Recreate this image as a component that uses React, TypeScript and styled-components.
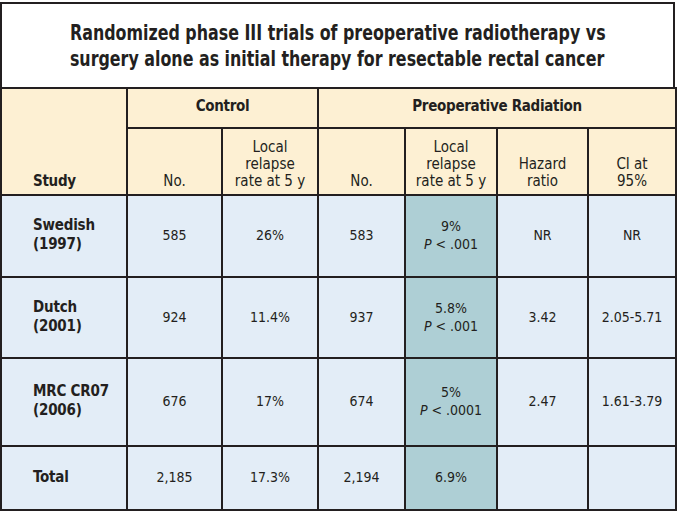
import styled, { createGlobalStyle } from 'styled-components'

const GlobalStyle = createGlobalStyle`
  body {
    margin: 0;
    background: #ffffff;
    font-family: "Liberation Sans Narrow", "DejaVu Sans Condensed", "Liberation Sans", sans-serif;
    color: #231f20;
  }
`

const Frame = styled.div`
  width: 675px;
  margin: 2px 0 0 0;
  border: 2px solid #231f20;
  box-sizing: border-box;
`

const Title = styled.h1`
  margin: 0;
  height: 83px;
  display: flex;
  flex-direction: column;
  justify-content: center;
  align-items: center;
  font-size: 21px;
  line-height: 26px;
  font-weight: bold;
  box-sizing: border-box;
`

// the reference uses a condensed face, so squeeze the title lines
const TitleLine = styled.span`
  display: inline-block;
  white-space: nowrap;
  transform: scaleX(0.84);
`

const Table = styled.table`
  border-collapse: collapse;
  table-layout: fixed;
  margin: 0 0 -2px -2px;
  width: calc(100% + 4px);
`

const HeadCell = styled.th<{ $align?: 'left' | 'center' }>`
  background: #fdf0d3;
  border: 2px solid #231f20;
  font-size: 15px;
  line-height: 17px;
  font-weight: normal;
  text-align: ${(p) => p.$align ?? 'center'};
  vertical-align: bottom;
  padding: 0 4px 4px;
`

const GroupCell = styled(HeadCell)`
  font-weight: bold;
  letter-spacing: -0.3px;
  vertical-align: middle;
  padding: 0 4px 3px;
`

const StudyHead = styled(HeadCell)`
  font-weight: bold;
  letter-spacing: -0.3px;
  padding-left: 31px;
`

const Cell = styled.td<{ $hi?: boolean }>`
  background: ${(p) => (p.$hi ? '#aecfd5' : '#e3edf7')};
  border: 2px solid #231f20;
  font-size: 14px;
  line-height: 18px;
  text-align: center;
  vertical-align: middle;
  padding: 0 4px 2px;
`

const StudyCell = styled(Cell)`
  text-align: left;
  font-weight: bold;
  font-size: 15px;
  line-height: 19px;
  letter-spacing: -0.2px;
  padding-left: 31px;
`

const PValue = styled.div`
  white-space: nowrap;
  em {
    font-style: italic;
  }
`

type Trial = {
  study: [string, string?]
  ctrlNo: string
  ctrlRate: string
  radNo: string
  radRate: string
  p?: string
  hazard: string
  ci: string
  height: number
}

const trials: Trial[] = [
  { study: ['Swedish', '(1997)'], ctrlNo: '585', ctrlRate: '26%', radNo: '583', radRate: '9%', p: '.001', hazard: 'NR', ci: 'NR', height: 82 },
  { study: ['Dutch', '(2001)'], ctrlNo: '924', ctrlRate: '11.4%', radNo: '937', radRate: '5.8%', p: '.001', hazard: '3.42', ci: '2.05-5.71', height: 81 },
  { study: ['MRC CR07', '(2006)'], ctrlNo: '676', ctrlRate: '17%', radNo: '674', radRate: '5%', p: '.0001', hazard: '2.47', ci: '1.61-3.79', height: 88 },
  { study: ['Total'], ctrlNo: '2,185', ctrlRate: '17.3%', radNo: '2,194', radRate: '6.9%', hazard: '', ci: '', height: 64 },
]

export default function App() {
  return (
    <>
      <GlobalStyle />
      <Frame>
        <Title>
          <TitleLine>Randomized phase III trials of preoperative radiotherapy vs</TitleLine>
          <TitleLine>surgery alone as initial therapy for resectable rectal cancer</TitleLine>
        </Title>
        <Table>
          <colgroup>
            <col style={{ width: 126 }} />
            <col style={{ width: 95 }} />
            <col style={{ width: 96 }} />
            <col style={{ width: 87 }} />
            <col style={{ width: 92 }} />
            <col style={{ width: 91 }} />
            <col style={{ width: 88 }} />
          </colgroup>
          <thead>
            <tr style={{ height: 40 }}>
              <StudyHead rowSpan={2} $align="left">Study</StudyHead>
              <GroupCell colSpan={2}>Control</GroupCell>
              <GroupCell colSpan={4}>Preoperative Radiation</GroupCell>
            </tr>
            <tr style={{ height: 67 }}>
              <HeadCell>No.</HeadCell>
              <HeadCell>Local<br />relapse<br />rate at 5 y</HeadCell>
              <HeadCell>No.</HeadCell>
              <HeadCell>Local<br />relapse<br />rate at 5 y</HeadCell>
              <HeadCell>Hazard<br />ratio</HeadCell>
              <HeadCell>CI at<br />95%</HeadCell>
            </tr>
          </thead>
          <tbody>
            {trials.map((t) => (
              <tr key={t.study[0]} style={{ height: t.height }}>
                <StudyCell>
                  {t.study[0]}
                  {t.study[1] && (
                    <>
                      <br />
                      {t.study[1]}
                    </>
                  )}
                </StudyCell>
                <Cell>{t.ctrlNo}</Cell>
                <Cell>{t.ctrlRate}</Cell>
                <Cell>{t.radNo}</Cell>
                <Cell $hi>
                  {t.radRate}
                  {t.p && (
                    <PValue>
                      <em>P</em> &lt; {t.p}
                    </PValue>
                  )}
                </Cell>
                <Cell>{t.hazard}</Cell>
                <Cell>{t.ci}</Cell>
              </tr>
            ))}
          </tbody>
        </Table>
      </Frame>
    </>
  )
}
